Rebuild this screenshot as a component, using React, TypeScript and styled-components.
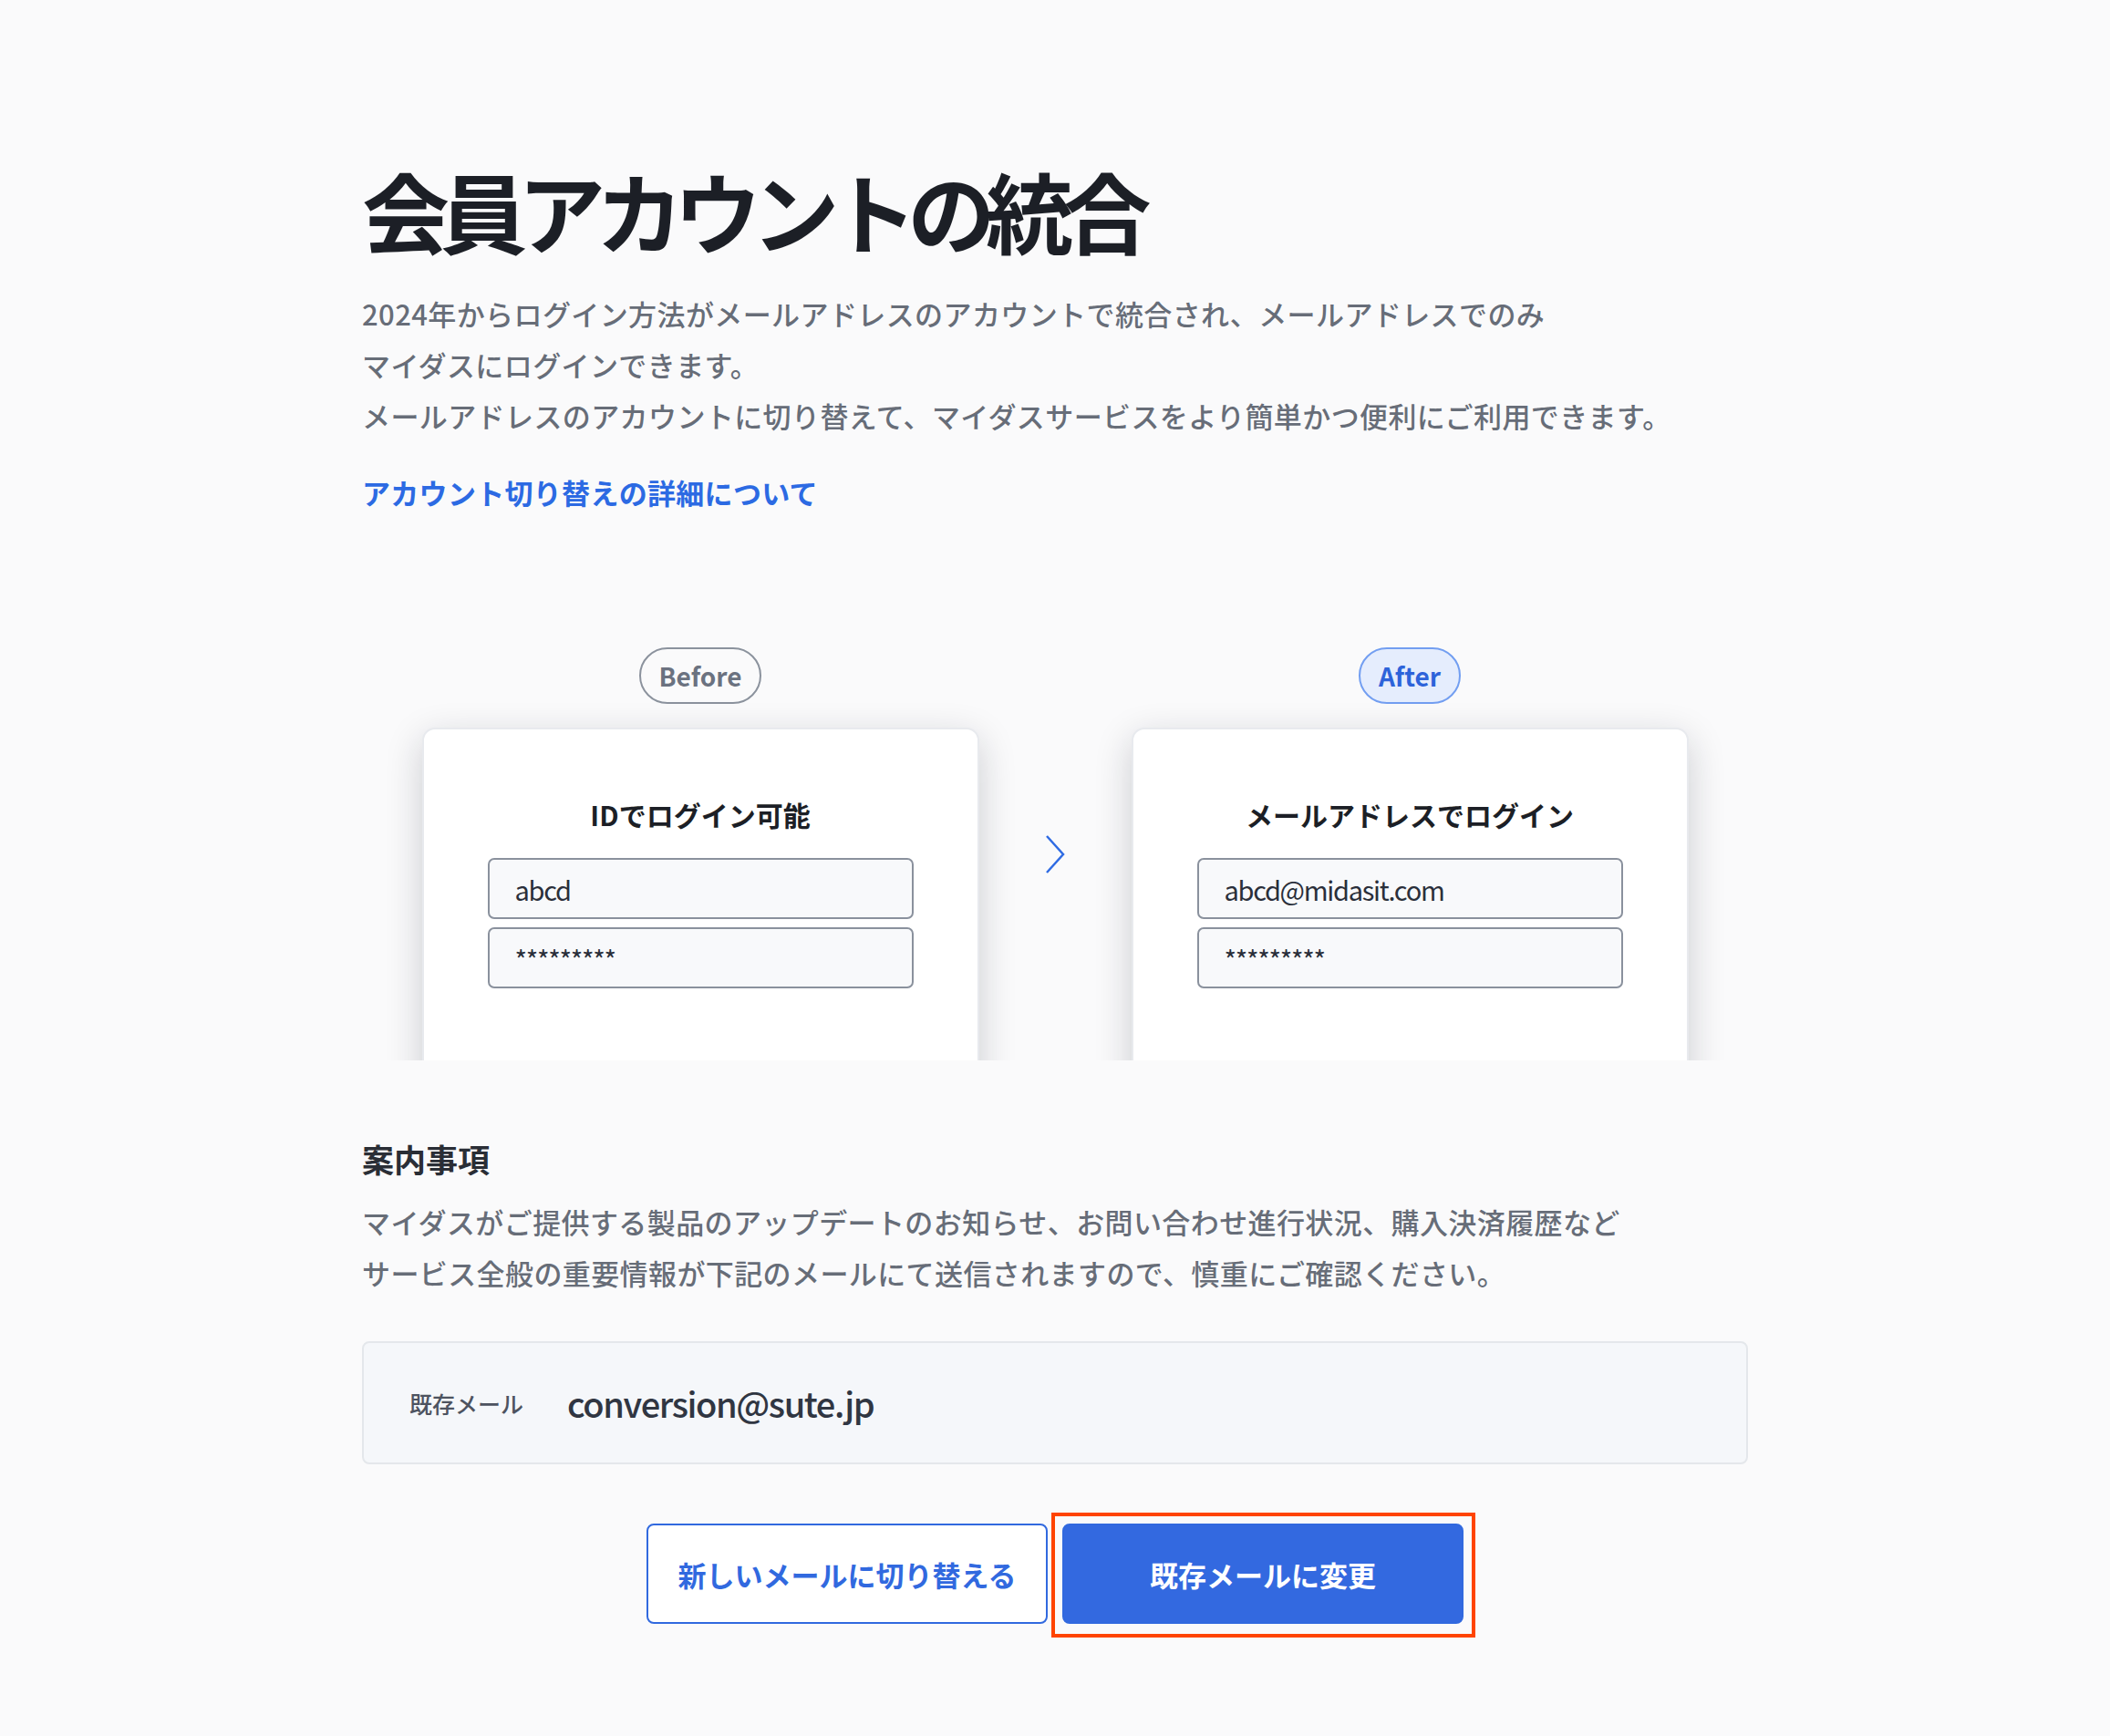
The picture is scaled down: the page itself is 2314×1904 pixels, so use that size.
import React from 'react'
import styled, { createGlobalStyle } from 'styled-components'

const GlobalStyle = createGlobalStyle`
  body {
    margin: 0;
    background: #fafafb;
    font-family: "Noto Sans CJK JP", "Noto Sans", sans-serif;
    color: #1c1f26;
  }
`

const StyledPage = styled.main`
  width: 1520px;
  margin: 0 auto;
  padding: 172px 0 119px;
`

const StyledTitle = styled.h1`
  margin: 0;
  font-size: 96px;
  line-height: 115px;
  font-weight: 700;
  letter-spacing: -10.5px;
  color: #1c1f26;
`

const StyledText = styled.p<{ $gap?: number }>`
  margin: ${({ $gap }) => $gap ?? 0}px 0 0;
  font-size: 31px;
  line-height: 56px;
  font-weight: 500;
  color: #676d78;
  letter-spacing: 0.4px;
`

const StyledLink = styled.a`
  display: block;
  margin-top: 28px;
  font-size: 31px;
  line-height: 56px;
  font-weight: 700;
  letter-spacing: 0.3px;
  color: #2c6ae3;
  text-decoration: none;
  cursor: pointer;
`

const StyledCompare = styled.section`
  margin-top: 142px;
  height: 453px;
  overflow: hidden;
  display: grid;
  grid-template-columns: 611px 167px 611px;
  justify-content: center;
`

const StyledColumn = styled.div`
  display: flex;
  flex-direction: column;
  align-items: center;
  gap: 26px;
`

const StyledBadge = styled.span<{ $active?: boolean }>`
  box-sizing: border-box;
  height: 62px;
  padding: 0 20px;
  display: inline-flex;
  align-items: center;
  border-radius: 31px;
  font-size: 28px;
  font-weight: 700;
  border: 2px solid ${({ $active }) => ($active ? '#729ef1' : '#8b929d')};
  background: ${({ $active }) => ($active ? '#e5edfd' : 'transparent')};
  color: ${({ $active }) => ($active ? '#2d63da' : '#6b7280')};
`

const StyledCard = styled.div`
  box-sizing: border-box;
  width: 611px;
  height: 420px;
  padding: 71px 70px 0;
  background: #ffffff;
  border: 2px solid #e8eaee;
  border-radius: 14px;
  box-shadow: 0 12px 40px rgba(20, 24, 40, 0.2);
  display: flex;
  flex-direction: column;
  align-items: stretch;
`

const StyledCardTitle = styled.h3`
  margin: 0 0 26px;
  text-align: center;
  font-size: 30px;
  line-height: 44px;
  font-weight: 700;
  color: #1c1f26;
`

const StyledField = styled.div`
  box-sizing: border-box;
  height: 67px;
  margin-bottom: 9px;
  padding: 0 28px;
  display: flex;
  align-items: center;
  background: #f8f9fb;
  border: 2px solid #8a919d;
  border-radius: 7px;
  font-size: 29px;
  letter-spacing: -1.3px;
  color: #2a2f3a;
`

const StyledArrow = styled.div`
  padding-top: 205px;
  display: flex;
  justify-content: center;
`

const StyledHeading = styled.h2`
  margin: 83px 0 0;
  font-size: 35px;
  line-height: 50px;
  font-weight: 700;
  color: #2a2e36;
`

const StyledInfoBox = styled.div`
  box-sizing: border-box;
  margin-top: 47px;
  height: 135px;
  padding: 0 50px;
  display: flex;
  align-items: center;
  gap: 48px;
  background: #f5f7fa;
  border: 2px solid #e4e7eb;
  border-radius: 8px;
`

const StyledInfoLabel = styled.span`
  font-size: 25px;
  font-weight: 500;
  color: #4d5360;
`

const StyledInfoValue = styled.span`
  font-size: 38px;
  font-weight: 500;
  letter-spacing: -1.4px;
  color: #303642;
`

const StyledActions = styled.div`
  margin-top: 65px;
  display: flex;
  justify-content: center;
  gap: 16px;
`

const StyledButton = styled.button<{ $primary?: boolean }>`
  position: relative;
  box-sizing: border-box;
  width: 440px;
  height: 110px;
  border-radius: 8px;
  border: 2px solid #3169df;
  background: ${({ $primary }) => ($primary ? '#3369e0' : '#ffffff')};
  color: ${({ $primary }) => ($primary ? '#ffffff' : '#3169df')};
  font-family: inherit;
  font-size: 31px;
  font-weight: 700;
  cursor: pointer;

  ${({ $primary }) =>
    $primary &&
    `
    &::after {
      content: '';
      position: absolute;
      top: -14px;
      left: -14px;
      right: -15px;
      bottom: -17px;
      border: 4px solid #ff4400;
      pointer-events: none;
    }
  `}
`

export default function App() {
  return (
    <>
      <GlobalStyle />
      <StyledPage>
        <StyledTitle>会員アカウントの統合</StyledTitle>
        <StyledText $gap={29}>
          2024年からログイン方法がメールアドレスのアカウントで統合され、メールアドレスでのみ
          <br />
          マイダスにログインできます。
          <br />
          メールアドレスのアカウントに切り替えて、マイダスサービスをより簡単かつ便利にご利用できます。
        </StyledText>
        <StyledLink>アカウント切り替えの詳細について</StyledLink>

        <StyledCompare>
          <StyledColumn>
            <StyledBadge>Before</StyledBadge>
            <StyledCard>
              <StyledCardTitle>IDでログイン可能</StyledCardTitle>
              <StyledField>abcd</StyledField>
              <StyledField>*********</StyledField>
            </StyledCard>
          </StyledColumn>
          <StyledArrow>
            <svg width="24" height="44" viewBox="0 0 24 44" fill="none">
              <polyline points="3,2 21,22 3,42" stroke="#2f6be3" strokeWidth="2.5" strokeLinejoin="miter" />
            </svg>
          </StyledArrow>
          <StyledColumn>
            <StyledBadge $active>After</StyledBadge>
            <StyledCard>
              <StyledCardTitle>メールアドレスでログイン</StyledCardTitle>
              <StyledField>abcd@midasit.com</StyledField>
              <StyledField>*********</StyledField>
            </StyledCard>
          </StyledColumn>
        </StyledCompare>

        <StyledHeading>案内事項</StyledHeading>
        <StyledText $gap={16}>
          マイダスがご提供する製品のアップデートのお知らせ、お問い合わせ進行状況、購入決済履歴など
          <br />
          サービス全般の重要情報が下記のメールにて送信されますので、慎重にご確認ください。
        </StyledText>

        <StyledInfoBox>
          <StyledInfoLabel>既存メール</StyledInfoLabel>
          <StyledInfoValue>conversion@sute.jp</StyledInfoValue>
        </StyledInfoBox>

        <StyledActions>
          <StyledButton>新しいメールに切り替える</StyledButton>
          <StyledButton $primary>既存メールに変更</StyledButton>
        </StyledActions>
      </StyledPage>
    </>
  )
}
